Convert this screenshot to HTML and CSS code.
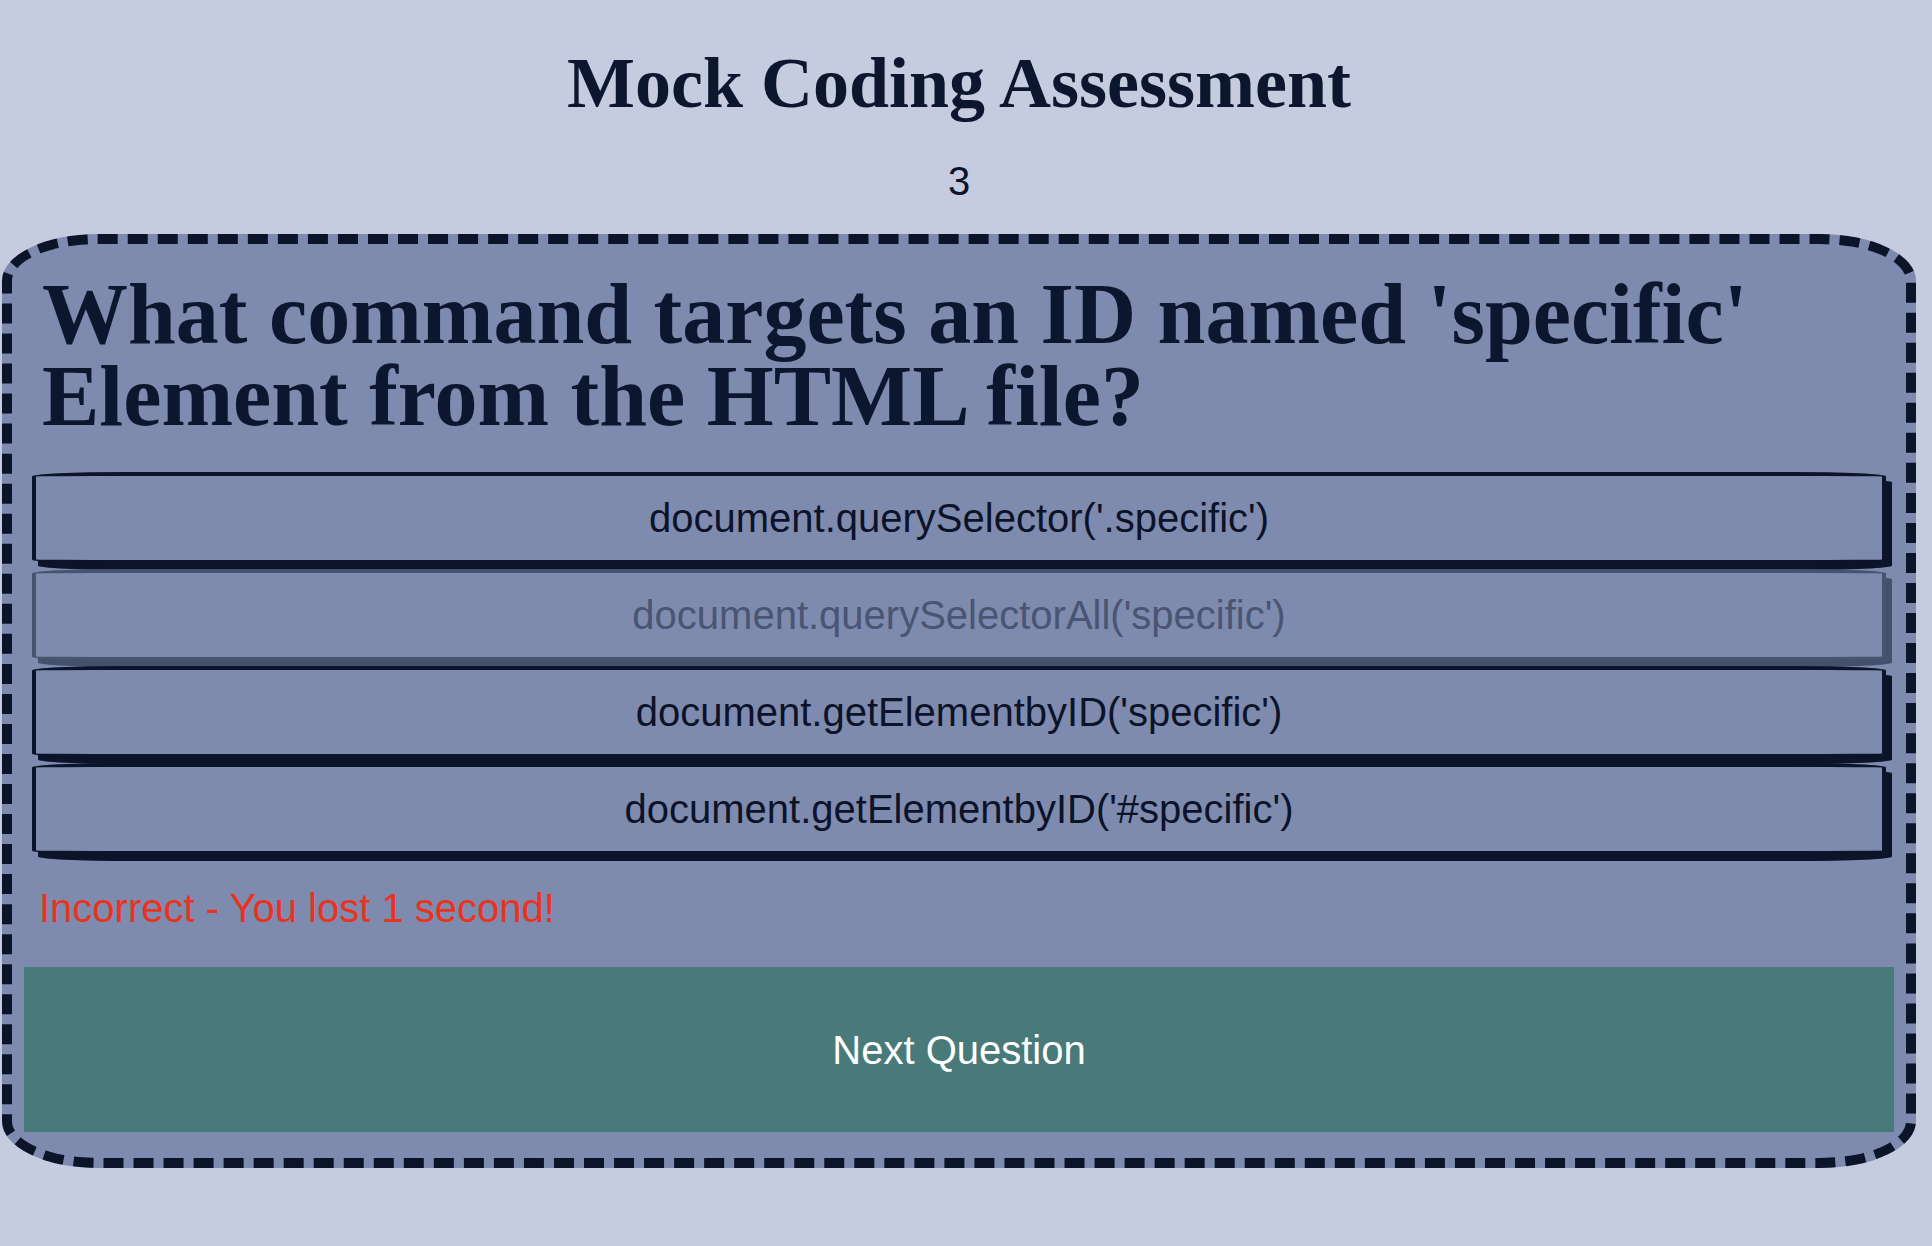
FILE: index.html
```html
<!DOCTYPE html>
<html lang="en">
<head>
<meta charset="utf-8">
<title>Mock Coding Assessment</title>
<link rel="stylesheet" href="styles.css">
</head>
<body>
<div class="page">
  <header class="header">
    <h1 class="title">Mock Coding Assessment</h1>
    <div class="timer">3</div>
  </header>
  <main class="card">
    <h2 class="question">What command targets an ID named 'specific' Element from the HTML file?</h2>
    <div class="answers">
      <button class="answer">document.querySelector('.specific')</button>
      <button class="answer answer--dim">document.querySelectorAll('specific')</button>
      <button class="answer">document.getElementbyID('specific')</button>
      <button class="answer">document.getElementbyID('#specific')</button>
    </div>
    <p class="feedback">Incorrect - You lost 1 second!</p>
    <button class="next">Next Question</button>
  </main>
</div>
</body>
</html>
```

FILE: styles.css
```css
* {
  box-sizing: border-box;
}

html,
body {
  margin: 0;
}

body {
  background: #c6cce0;
  font-family: "Liberation Sans", Arial, sans-serif;
  color: #0c1329;
}

.page {
  padding: 0 16px 0 2px;
}

.header {
  display: flex;
  flex-direction: column;
  align-items: center;
}

.title {
  margin: 42px 0 0;
  font-family: "Liberation Serif", Georgia, serif;
  font-weight: 700;
  font-size: 72px;
  line-height: 82px;
  color: #0d162f;
}

.timer {
  margin-top: 34px;
  font-size: 40px;
  line-height: 46px;
  color: #0c1329;
}

.card {
  margin-top: 30px;
  height: 934px;
  border: 10px dashed #0c1429;
  border-radius: 5%;
  background: #7e8bae;
  padding: 12px;
  display: flex;
  flex-direction: column;
}

.question {
  margin: 17px 0 0 18px;
  font-family: "Liberation Serif", Georgia, serif;
  font-weight: 700;
  font-size: 86px;
  line-height: 82px;
  color: #0d162f;
}

.answers {
  margin-top: 35px;
  padding: 0 8px;
  display: flex;
  flex-direction: column;
  gap: 5px;
}

.answer {
  display: block;
  width: 100%;
  height: 92px;
  margin: 0;
  padding: 0;
  border: 4px solid #0c1429;
  border-radius: 5%;
  background: #7e8bae;
  box-shadow: 6px 6px 0 #0c1429;
  font-family: "Liberation Sans", Arial, sans-serif;
  font-size: 40px;
  line-height: 46px;
  color: #0c1329;
  text-align: center;
}

.answer--dim {
  border-color: #48536f;
  box-shadow: 6px 6px 0 #45506d;
  color: #4a5473;
}

.feedback {
  margin: 30px 0 0;
  padding-left: 15px;
  font-size: 40px;
  line-height: 46px;
  color: #e8331f;
}

.next {
  margin-top: 36px;
  width: 100%;
  height: 165px;
  border: none;
  background: #497a7a;
  color: #ffffff;
  font-family: "Liberation Sans", Arial, sans-serif;
  font-size: 40px;
  line-height: 46px;
}
```
